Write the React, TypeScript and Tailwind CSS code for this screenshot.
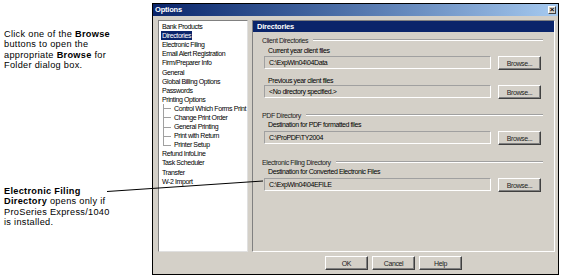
import React from "react";

const items: { label: string; sub?: boolean; selected?: boolean; last?: boolean }[] = [
  { label: "Bank Products" },
  { label: "Directories", selected: true },
  { label: "Electronic Filing" },
  { label: "Email Alert Registration" },
  { label: "Firm/Preparer Info" },
  { label: "General" },
  { label: "Global Billing Options" },
  { label: "Passwords" },
  { label: "Printing Options" },
  { label: "Control Which Forms Print", sub: true },
  { label: "Change Print Order", sub: true },
  { label: "General Printing", sub: true },
  { label: "Print with Return", sub: true },
  { label: "Printer Setup", sub: true, last: true },
  { label: "Refund InfoLine" },
  { label: "Task Scheduler" },
  { label: "Transfer" },
  { label: "W-2 Import" },
];

const Button = ({ label, className = "" }: { label: string; className?: string }) => (
  <div
    className={`flex items-center justify-center h-[14px] w-[43px] bg-[#d4d0c8] border border-t-white border-l-white border-r-[#404040] border-b-[#404040] shadow-[inset_-1px_-1px_0_#808080] leading-none text-[#222] ${className}`}
  >
    {label}
  </div>
);

const GroupLabel = ({ label, className = "" }: { label: string; className?: string }) => (
  <div className={`flex items-center h-[9px] pl-[9px] pr-[11px] ${className}`}>
    <span className="leading-[9px] text-[#222] whitespace-nowrap">{label}</span>
    <div className="flex-1 ml-[5px] h-[2px] border-t border-t-[#a0a0a0] border-b border-b-white" />
  </div>
);

const Field = ({ value }: { value: string }) => (
  <div className="flex items-start pl-[11px] pr-[13px] h-[14px]">
    <div className="w-[227px] h-[13px] flex items-center pl-[4px] border border-t-[#a0a0a0] border-l-[#a0a0a0] border-r-white border-b-white leading-none whitespace-nowrap">
      {value}
    </div>
    <Button label="Browse..." className="ml-[7px]" />
  </div>
);

const Label = ({ label, className = "" }: { label: string; className?: string }) => (
  <div className={`h-[9px] leading-[9px] pl-[15px] whitespace-nowrap ${className}`}>{label}</div>
);

const Dialog = () => (
  <div className="mt-[3px] w-[407px] h-[272px] border border-black flex flex-col bg-[#d4d0c8] text-[7px] tracking-[-0.4px] text-black">
    {/* title bar */}
    <div className="h-[12px] flex items-center justify-between bg-gradient-to-r from-[#0a246a] to-[#a6caf0] pl-[2px] pr-[2px]">
      <span className="font-bold text-white text-[7.5px] tracking-[-0.2px] leading-none">Options</span>
      <div className="w-[8px] h-[8px] bg-[#d4d0c8] border border-t-white border-l-white border-r-[#404040] border-b-[#404040] flex items-center justify-center text-[8px] tracking-normal font-bold leading-none">
        ×
      </div>
    </div>

    <div className="flex pt-[4px] pl-[5px] gap-[4px]">
      {/* tree list */}
      <div className="w-[90px] h-[232px] bg-white border border-t-[#808080] border-l-[#808080] border-r-[#e0e0e0] border-b-[#e0e0e0] pt-[1px]">
        {items.map((it) => (
          <div key={it.label} className="h-[9.1px] flex items-center leading-none whitespace-nowrap">
            {it.sub ? (
              <>
                <div className="relative w-[8px] h-full ml-[4px]">
                  <div className={`absolute left-0 top-0 w-px bg-[#a0a0a0] ${it.last ? "h-1/2" : "h-full"}`} />
                  <div className="absolute left-0 top-1/2 w-[8px] h-px bg-[#a0a0a0]" />
                </div>
                <span className="ml-[3px]">{it.label}</span>
              </>
            ) : (
              <span className={`ml-[2px] px-[1px] ${it.selected ? "bg-[#0a246a] text-white py-[1px]" : ""}`}>
                {it.label}
              </span>
            )}
          </div>
        ))}
      </div>

      {/* panel */}
      <div className="w-[303px] h-[232px] border border-t-[#808080] border-l-[#808080] border-r-white border-b-white flex flex-col">
        <div className="h-[11px] bg-[#0a246a] flex items-center pl-[4px] font-bold text-white text-[7.5px] tracking-[-0.2px] leading-none">
          Directories
        </div>
        <GroupLabel label="Client Directories" className="mt-[3.5px]" />
        <Label label="Current year client files" className="mt-[1px]" />
        <div className="mt-[1.5px]">
          <Field value={"C:\\ExpWin04\\04Data"} />
        </div>
        <Label label="Previous year client files" className="mt-[5.5px]" />
        <div className="mt-[0.5px]">
          <Field value={"<No directory specified.>"} />
        </div>
        <GroupLabel label="PDF Directory" className="mt-[11.5px]" />
        <Label label="Destination for PDF formatted files" />
        <div className="mt-[2.5px]">
          <Field value={"C:\\ProPDF\\TY2004"} />
        </div>
        <GroupLabel label="Electronic Filing Directory" className="mt-[12.5px]" />
        <Label label="Destination for Converted Electronic Files" className="mt-[0.5px]" />
        <div className="mt-[2px]">
          <Field value={"C:\\ExpWin04\\04EFILE"} />
        </div>
      </div>
    </div>

    {/* bottom buttons */}
    <div className="flex gap-[4px] pl-[172px] mt-[4px]">
      <Button label="OK" />
      <Button label="Cancel" />
      <Button label="Help" />
    </div>
  </div>
);

export default function App() {
  return (
    <div className="relative w-[576px] h-[277px] bg-white flex font-['Liberation_Sans',sans-serif]">
      {/* annotations */}
      <div className="w-[152px] pl-[4px] text-[9.2px] leading-[10.3px] tracking-[0.3px] text-black">
        <p className="mt-[29px]">
          Click one of the <b>Browse</b>
          <br />
          buttons to open the
          <br />
          appropriate <b>Browse</b> for
          <br />
          Folder dialog box.
        </p>
        <p className="mt-[116px]">
          <b>Electronic Filing</b>
          <br />
          <b>Directory</b> opens only if
          <br />
          ProSeries Express/1040
          <br />
          is installed.
        </p>
      </div>

      <Dialog />

      {/* leader line */}
      <svg className="absolute inset-0 pointer-events-none" width="576" height="277">
        <line x1="107" y1="191.5" x2="263" y2="181" stroke="#000" strokeWidth="1" />
      </svg>
    </div>
  );
}
